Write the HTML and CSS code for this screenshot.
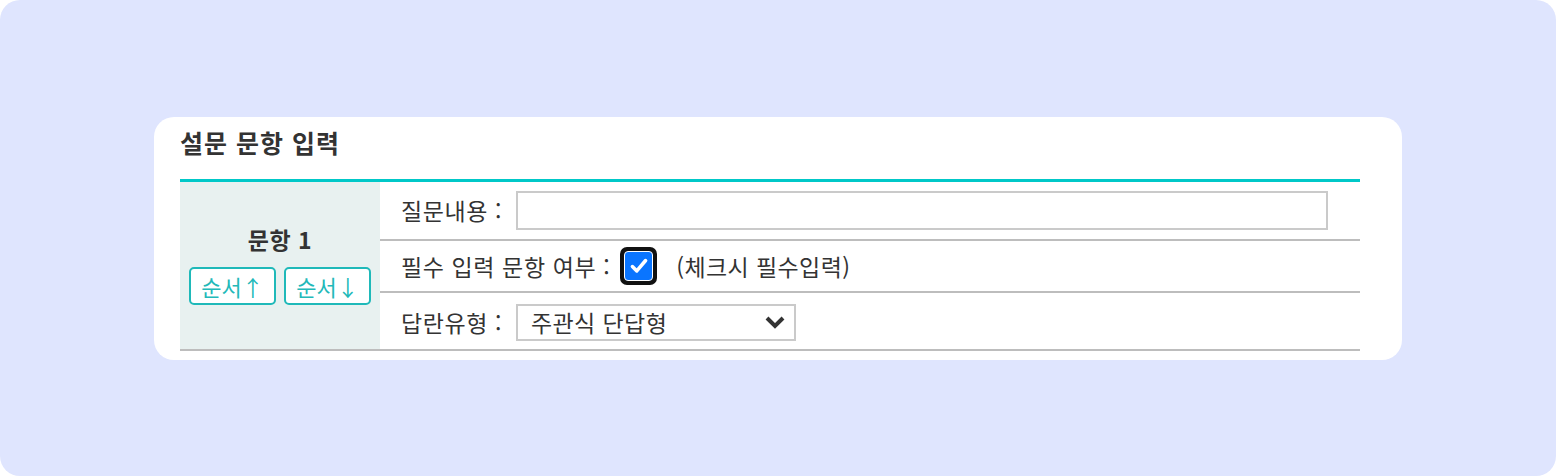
FILE: index.html
```html
<!DOCTYPE html>
<html lang="ko">
<head>
<meta charset="utf-8">
<title>설문 문항 입력</title>
<link rel="stylesheet" href="styles.css">
</head>
<body>
<div class="page">
  <section class="card">
    <h2 class="title">설문 문항 입력</h2>
    <div class="qtable">
      <div class="qhead">
        <div class="qnum">문항 1</div>
        <div class="order">
          <button class="obtn" type="button">순서↑</button>
          <button class="obtn" type="button">순서↓</button>
        </div>
      </div>
      <div class="row row-first">
        <span class="label fixed">질문내용 :</span>
        <input class="text-input" type="text">
      </div>
      <div class="row row-mid">
        <span class="label">필수 입력 문항 여부 :</span>
        <span class="check">
          <span class="check-inner">
            <svg class="check-mark" viewBox="0 0 20 20" width="22" height="22"><polyline points="4,10.5 8,14.5 16,5" fill="none" stroke="#fff" stroke-width="3.2" stroke-linecap="round" stroke-linejoin="round"/></svg>
          </span>
        </span>
        <span class="note">(체크시 필수입력)</span>
      </div>
      <div class="row row-last">
        <span class="label fixed">답란유형 :</span>
        <div class="select">
          <span class="select-text">주관식 단답형</span>
          <svg class="chev" viewBox="0 0 22 14" width="22" height="14"><polyline points="3,3 11,11 19,3" fill="none" stroke="#333" stroke-width="4"/></svg>
        </div>
      </div>
    </div>
  </section>
</div>
</body>
</html>
```

FILE: styles.css
```css
* { box-sizing: border-box; }
html, body { margin: 0; padding: 0; background: #ffffff; }
body {
  font-family: "Noto Sans CJK KR", "Noto Sans", sans-serif;
  color: #333333;
}
.page {
  width: 1556px;
  height: 476px;
  background: #dfe5fe;
  border-radius: 20px;
  display: flex;
  align-items: center;
  justify-content: center;
}
.card {
  width: 1248px;
  height: 243px;
  background: #ffffff;
  border-radius: 20px;
  padding: 0 42px 0 26px;
}
.title {
  margin: 0 0 10px 0;
  height: 52px;
  line-height: 50px;
  font-size: 25px;
  font-weight: 700;
  color: #333333;
  letter-spacing: 1px;
}
.qtable {
  display: grid;
  grid-template-columns: 200px 1fr;
  grid-template-rows: 59px 52px 56px;
  border-top: 3px solid #00c8c8;
  border-bottom: 2px solid #bdbdbd;
}
.qhead {
  grid-row: 1 / 4;
  grid-column: 1;
  background: #e8f1f0;
  display: flex;
  flex-direction: column;
  align-items: center;
  justify-content: center;
  gap: 14px;
  padding-bottom: 1px;
}
.qnum {
  font-size: 23px;
  font-weight: 700;
  line-height: 28px;
  color: #333333;
  letter-spacing: 0.5px;
}
.order {
  display: flex;
  gap: 8px;
}
.obtn {
  width: 87px;
  height: 38px;
  border: 2px solid #1fb9b9;
  border-radius: 5px;
  background: #ffffff;
  color: #22b9b9;
  font-family: "Noto Sans CJK KR", "Noto Sans", sans-serif;
  font-size: 22px;
  padding: 0;
  line-height: 32px;
}
.row {
  grid-column: 2;
  display: flex;
  align-items: center;
  padding-left: 21px;
}
.row-first { border-bottom: 2px solid #bdbdbd; }
.row-mid { border-bottom: 2px solid #bdbdbd; }
.row-last { padding-top: 3px; }
.label {
  font-size: 23px;
  line-height: 28px;
  color: #333333;
  white-space: nowrap;
  letter-spacing: 0.6px;
}
.label.fixed { width: 115px; flex: none; }
.text-input {
  width: 812px;
  height: 39px;
  border: 2px solid #cacaca;
  background: #ffffff;
  margin-top: 1px;
}
.check {
  margin-left: 10px;
  width: 37px;
  height: 38px;
  background: #111111;
  border-radius: 7px;
  padding: 4px;
  display: flex;
}
.check-inner {
  flex: 1;
  background: #0a75ff;
  border: 1px solid #ffffff;
  border-radius: 4px;
  display: flex;
  align-items: center;
  justify-content: center;
}
.note {
  margin-left: 19px;
  font-size: 23px;
  line-height: 28px;
  color: #333333;
  letter-spacing: 0.4px;
}
.select {
  width: 280px;
  height: 37px;
  border: 2px solid #cacaca;
  background: #ffffff;
  display: flex;
  align-items: center;
  justify-content: space-between;
  padding: 0 8px 0 13px;
}
.select-text {
  font-size: 23px;
  line-height: 28px;
  color: #333333;
  letter-spacing: 0.4px;
}
.chev { display: block; }
```
